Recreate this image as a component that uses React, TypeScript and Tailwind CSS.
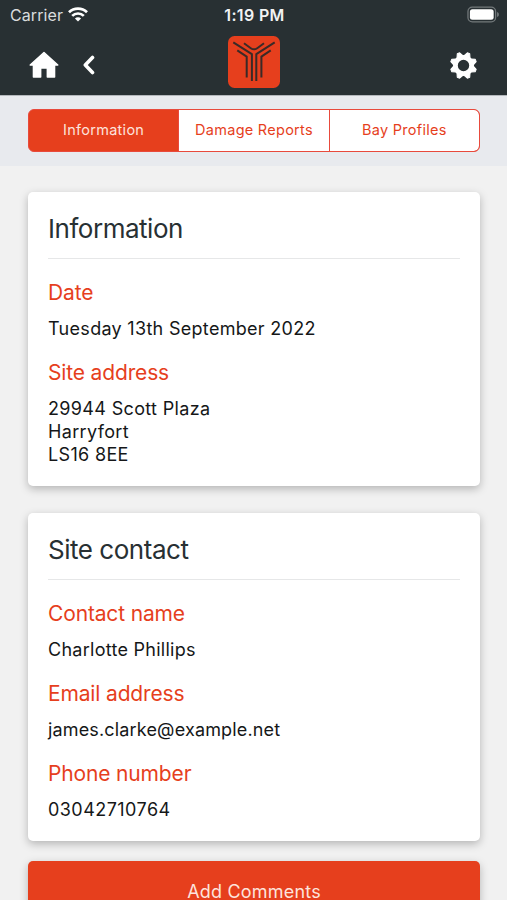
import React from 'react';

interface Entry {
    label: string;
    lines: string[];
    tracking?: string;
}

const tabs = ["Information", "Damage Reports", "Bay Profiles"];

const siteInfo: Entry[] = [
    { label: "Date", lines: ["Tuesday 13th September 2022"], tracking: "tracking-[0.3px]" },
    { label: "Site address", lines: ["29944 Scott Plaza", "Harryfort", "LS16 8EE"], tracking: "tracking-[0.34px]" },
];

const siteContact: Entry[] = [
    { label: "Contact name", lines: ["Charlotte Phillips"] },
    { label: "Email address", lines: ["james.clarke@example.net"], tracking: "tracking-[0.16px]" },
    { label: "Phone number", lines: ["03042710764"], tracking: "tracking-[0.45px]" },
];

function StatusBar() {
    return (
        <div className="grid h-[30px] grid-cols-3 items-center pl-[10px] pr-[8px] text-white">
            <div className="flex items-center gap-[5px]">
                <span className="text-[16px] tracking-[0.1px] text-[#d9dcdd]">Carrier</span>
                <svg className="mb-[2px]" width="20" height="15" viewBox="0 0 20 15" fill="none" stroke="#fff" strokeWidth="2.7">
                    <path d="M1 5.3a12.8 12.8 0 0 1 18 0" />
                    <path d="M4.2 8.9a8.2 8.2 0 0 1 11.6 0" />
                    <path d="M10 14.6 6.9 11.6a4.4 4.4 0 0 1 6.2 0z" fill="#fff" stroke="none" />
                </svg>
            </div>
            <span className="text-center text-[16px] font-semibold tracking-[0.35px] text-[#f1f3f3]">1:19 PM</span>
            <svg className="mb-[2px] justify-self-end" width="32" height="17" viewBox="0 0 33 17">
                <rect x="1" y="1" width="28.5" height="15" rx="4.5" fill="none" stroke="#73797b" strokeWidth="1.3" />
                <rect x="3" y="3" width="24.5" height="11" rx="2.6" fill="#fff" />
                <path d="M31 6v5c1.4-.6 1.9-1.4 1.9-2.5S32.4 6.6 31 6z" fill="#73797b" />
            </svg>
        </div>
    );
}

function Logo() {
    return (
        <svg width="52" height="52" viewBox="0 0 52 52">
            <rect width="52" height="52" rx="6.5" fill="#e63f1d" />
            <g fill="none" stroke="#3a2a27" strokeWidth="2" strokeLinejoin="round">
                <path d="M5.3 6.3 23.9 18.2v26.8" />
                <path d="M46.7 6.3 28.3 18.2v26.8" />
                <path d="M16 7.2 22.8 12.2q3.2 2.3 6.4 0L36 7.2" />
                <path d="M9.3 14.4 18.7 20.6v21" />
                <path d="M42.7 14.4 33.4 20.6v21" />
            </g>
        </svg>
    );
}

function NavBar() {
    return (
        <div className="grid h-[65px] grid-cols-3 items-start pl-[29px] pr-[29px] pt-[6px]">
            <div className="mt-[15px] flex items-center gap-[23px]">
                <svg width="30" height="28" viewBox="0 0 30 28" fill="#fff" stroke="#fff" strokeLinejoin="round">
                    <path d="M15 1.5 1.2 14h3.2V26h7.3V17h6.6V26h7.3V14h3.2z" strokeWidth="1.4" />
                </svg>
                <svg width="14" height="20" viewBox="0 0 14 20" fill="none" stroke="#fff">
                    <path d="M10.5 2.5 3.3 10l7.2 7.5" strokeWidth="3.6" strokeLinecap="round" strokeLinejoin="round" />
                </svg>
            </div>
            <div className="flex justify-center pl-px">
                <Logo />
            </div>
            <svg className="mt-[15px] justify-self-end" width="29" height="29" viewBox="-14.5 -14.5 29 29">
                <circle r="8.1" fill="none" stroke="#fff" strokeWidth="4.8" />
                {[22.5, 67.5, 112.5, 157.5, 202.5, 247.5, 292.5, 337.5].map((angle) => (
                    <path
                        key={angle}
                        d="M-3.2-9.3-1.3-13.2h2.6L3.2-9.3z"
                        fill="#fff"
                        stroke="#fff"
                        strokeLinejoin="round"
                        transform={`rotate(${angle})`}
                    />
                ))}
            </svg>
        </div>
    );
}

function Card({ title, entries }: { title: string; entries: Entry[] }) {
    return (
        <section className="rounded-[5px] bg-white p-5 shadow-[0_3px_8px_rgba(0,0,0,0.25)]">
            <h2 className="border-b border-[#e6e7e8] pb-3 text-[26px] leading-[34px] tracking-[-0.47px] text-[#283033]">{title}</h2>
            {entries.map((entry) => (
                <div key={entry.label} className="mt-[19px] first-of-type:mt-5">
                    <h3 className="text-[21px] leading-7 tracking-[-0.15px] text-[#e63f1d]">{entry.label}</h3>
                    <div className={`mt-2.5 text-[18px] leading-[23px] text-[#151718] ${entry.tracking ?? "tracking-[0.27px]"}`}>
                        {entry.lines.map((line) => (
                            <p key={line}>{line}</p>
                        ))}
                    </div>
                </div>
            ))}
        </section>
    );
}

export default function App() {
    return (
        <div className="h-[900px] w-full overflow-hidden bg-[#f1f1f1] font-['Inter',sans-serif]">
            <header className="h-24 border-b border-[#b4b8bc] bg-[#283033]">
                <StatusBar />
                <NavBar />
            </header>

            <div className="h-[70px] bg-[#e8eaee] pl-7 pr-[27px] pt-[13px]">
                <div className="flex h-[43px] gap-px overflow-hidden rounded-[6px] border border-[#e84a3c] bg-[#e84a3c]">
                    {tabs.map((tab, index) => (
                        <button
                            key={tab}
                            className={
                                index === 0
                                    ? "flex-1 bg-[#e63f1d] pb-[2px] text-[14.5px] tracking-[0.27px] text-[#fde3dc]"
                                    : "flex-1 bg-white pb-[2px] text-[14.5px] tracking-[0.27px] text-[#e63f1d] last:rounded-r-[5px]"
                            }
                        >
                            {tab}
                        </button>
                    ))}
                </div>
            </div>

            <main className="pl-7 pr-[27px] pt-[26px]">
                <div className="flex flex-col gap-[27px]">
                    <Card title="Information" entries={siteInfo} />
                    <Card title="Site contact" entries={siteContact} />
                </div>
                <button className="mt-5 h-[60px] w-full rounded-[5px] bg-[#e63f1d] text-[18px] tracking-[0.2px] text-[#fde3dc] shadow-[0_3px_8px_rgba(0,0,0,0.25)]">
                    Add Comments
                </button>
            </main>
        </div>
    );
}
